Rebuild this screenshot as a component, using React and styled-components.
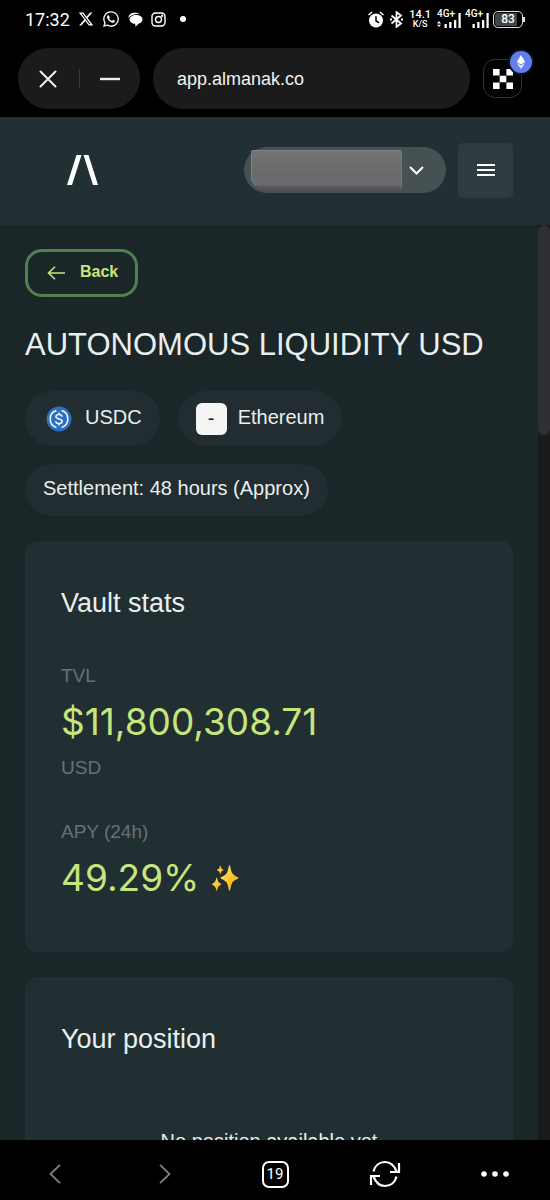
import React, { useState } from 'react'
import styled, { createGlobalStyle } from 'styled-components'
import { FaXTwitter, FaWhatsapp } from 'react-icons/fa6'

const page = '#1b2628'
const panel = '#212f33'
const chip = '#212d30'
const accent = '#c6e57c'
const light = '#e9eeef'
const muted = '#6a7072'
const sans = "'Liberation Sans', Arial, sans-serif"
const narrow = 'Roboto, sans-serif'

const UsdcIcon = () => (
	<svg width="26" height="26" viewBox="0 0 26 26" fill="none" aria-hidden="true">
		<circle cx="13" cy="13" r="12.5" fill="#2b6fc2" />
		<path
			d="M10.4 4.6a8.8 8.8 0 0 0 0 16.8M15.6 4.6a8.8 8.8 0 0 1 0 16.8"
			stroke="#eef4fb"
			strokeWidth="1.6"
		/>
		<path
			d="M16 10.6c-.2-1.4-1.3-2.1-3-2.1-1.8 0-3 .8-3 2.2 0 3.2 6.2 1.3 6.2 4.6 0 1.4-1.3 2.3-3.2 2.3s-3.1-.8-3.3-2.3M13 6.6v1.900M13 17.6v1.900"
			stroke="#eef4fb"
			strokeWidth="1.6"
		/>
	</svg>
)

const Sparkles = () => (
	<svg width="28" height="28" viewBox="0 0 28 28" aria-hidden="true">
		<defs>
			<linearGradient id="gold" x1="0" y1="0" x2="1" y2="1">
				<stop offset="0" stopColor="#fdea6b" />
				<stop offset="0.5" stopColor="#fcc934" />
				<stop offset="1" stopColor="#f29a1f" />
			</linearGradient>
		</defs>
		<g fill="url(#gold)">
			<path d="M18.5 1c.8 0 1 4.5 2.5 7.8s6.5 4 6.5 5.2-5 1.8-6.5 5.2S19.3 27 18.5 27s-1-4.5-2.5-7.8S9.5 15.2 9.5 14s5-1.900 6.5-5.2S17.7 1 18.5 1Z" />
			<path d="M5.7 13.5c.5 0 .6 2.5 1.5 4s3.2 2 3.2 2.7-2.3 1.1-3.2 2.7-1 4-1.5 4-.6-2.4-1.5-4S1 20.9 1 20.2s2.3-1.2 3.2-2.7 1-4 1.5-4Z" />
			<path d="M9.3 1.5c.4 0 .4 1.7 1 2.7s2.4 1.3 2.4 1.8-1.8.8-2.4 1.8-.6 2.7-1 2.7-.4-1.7-1-2.7S5.9 6.5 5.9 6s1.8-.8 2.4-1.8.6-2.7 1-2.7Z" />
		</g>
	</svg>
)

const ChatIcon = () => (
	<svg width="15" height="15" viewBox="0 0 15 15" fill="#fff" aria-hidden="true">
		<path d="M.6 6.2C.3 2.8 3 1 6 .8c2.5-.1 5 .4 6 1.6C8 1.6 3 2.4.6 6.2Z" />
		<path d="M8 3c3.8 0 6.5 1.6 6.5 4.3 0 2.2-1.3 3.7-3.7 4.3L7.5 14.7l-.3-2.9C4 11.6 1.6 10 1.6 7.5 1.6 4.8 4.3 3 8 3Z" />
	</svg>
)

const CameraIcon = () => (
	<svg width="15" height="15" viewBox="0 0 15 15" fill="none" stroke="#fff" strokeWidth="1.4" aria-hidden="true">
		<rect x="1" y="1" width="13" height="13" rx="3.5" />
		<circle cx="7.5" cy="7.5" r="3" />
		<circle cx="11.2" cy="3.8" r="0.5" />
	</svg>
)

const AlarmIcon = () => (
	<svg width="16" height="17" viewBox="0 0 16 17" fill="none" strokeLinecap="round" aria-hidden="true">
		<circle cx="8" cy="9.5" r="7" fill="#fff" />
		<path d="M1 3.6 3.7 1.3M15 3.6l-2.7-2.3" stroke="#fff" strokeWidth="1.5" />
		<path d="M8 5.8v4l2.6 1.7" stroke="#000" strokeWidth="1.5" />
	</svg>
)

const BluetoothIcon = () => (
	<svg width="13" height="17" viewBox="0 0 13 17" fill="none" stroke="#fff" strokeWidth="1.8" aria-hidden="true">
		<path d="m1.5 4.5 9.5 8-4.5 3.4V1.1L11 4.5l-9.5 8" />
		<path d="M0 8.5h2M11 8.5h2" />
	</svg>
)

const Bars = ({ arrows }) => (
	<svg width="24" height="17" viewBox="0 0 24 17" fill="#fff" aria-hidden="true">
		{arrows && <path d="m2 10 2 2.4H0ZM2 16l2-2.3H0Z" />}
		<path d="M7.5 13h2.3v4H7.5ZM12.2 11h2.3v6h-2.3ZM17 9h2.3v8H17ZM21.5 2h2.2v15h-2.2Z" />
	</svg>
)

const App = () => {
	const [url, setUrl] = useState('app.almanak.co')

	return (
		<Screen>
			<GlobalStyle />
			<StatusBar>
				<Group $gap={8}>
					<Clock>17:32</Clock>
					<FaXTwitter size={16} />
					<FaWhatsapp size={18} />
					<ChatIcon />
					<CameraIcon />
					<Dot />
				</Group>
				<Group $gap={6}>
					<AlarmIcon />
					<BluetoothIcon />
					<Speed>
						<b>14.1</b>
						<small>K/S</small>
					</Speed>
					<Group $gap={4}>
						<Signal>
							<span>4G+</span>
							<Bars arrows />
						</Signal>
						<Signal>
							<span>4G+</span>
							<Bars />
						</Signal>
						<Battery>83</Battery>
					</Group>
				</Group>
			</StatusBar>

			<Toolbar>
				<WindowButtons>
					<PlainButton aria-label="Close">
						<svg width="18" height="18" viewBox="0 0 18 18" stroke="#f0f0f0" strokeWidth="2" strokeLinecap="round">
							<path d="m1.5 1.5 15 15M16.5 1.5l-15 15" />
						</svg>
					</PlainButton>
					<Divider />
					<PlainButton aria-label="Minimise">
						<svg width="20" height="18" viewBox="0 0 20 18" stroke="#f0f0f0" strokeWidth="2.4">
							<path d="M0 9h20" />
						</svg>
					</PlainButton>
				</WindowButtons>
				<Address
					aria-label="Address"
					value={url}
					onChange={(e) => setUrl(e.target.value)}
				/>
				<WalletApp aria-label="Wallet">
					<svg width="20" height="20" viewBox="0 0 20 20" fill="#fff">
						<path d="M0 0h6.600v6.600H0ZM13.400 0H20v6.600h-6.600ZM6.700 6.700h6.600v6.600H6.700ZM0 13.400h6.600V20H0ZM13.400 13.400H20V20h-6.600Z" />
					</svg>
					<ChainBadge>
						<svg width="10" height="14" viewBox="0 0 10 14" fill="#fff">
							<path d="M5 0 9.2 7 5 9.5.8 7Z" />
							<path d="M.8 8.1 5 10.6l4.2-2.5L5 14Z" opacity="0.85" />
						</svg>
					</ChainBadge>
				</WalletApp>
			</Toolbar>

			<Header>
				<Logo href="#" aria-label="Home">
					<svg width="31" height="30" viewBox="0 0 31 30" fill="#fff">
						<path d="M9.5 0h5L5 30H0ZM16.5 0h5L31 30h-5Z" />
					</svg>
				</Logo>
				<Group $gap={12}>
					<Account aria-label="Account">
						<Redacted />
						<svg width="15" height="9" viewBox="0 0 15 9" fill="none" stroke="#fff" strokeWidth="2">
							<path d="m1 1 6.5 6.5L14 1" />
						</svg>
					</Account>
					<Menu aria-label="Menu">
						<svg width="18" height="14" viewBox="0 0 18 14" stroke="#fff" strokeWidth="2">
							<path d="M0 2h18M0 7h18M0 12h18" />
						</svg>
					</Menu>
				</Group>
			</Header>

			<Body>
				<Main>
					<Back>
						<svg width="18" height="14" viewBox="0 0 18 14" fill="none" stroke={accent} strokeWidth="1.6">
							<path d="M18 7H1.5M8 .7 1.5 7 8 13.3" />
						</svg>
						<span>Back</span>
					</Back>
					<Title>AUTONOMOUS LIQUIDITY USD</Title>
					<Chips>
						<Chip>
							<ChipIcon>
								<UsdcIcon />
							</ChipIcon>
							<span>USDC</span>
						</Chip>
						<Chip>
							<ChipIcon $filled>-</ChipIcon>
							<span>Ethereum</span>
						</Chip>
						<Chip $short>
							<span>Settlement: 48 hours (Approx)</span>
						</Chip>
					</Chips>

					<Card>
						<CardTitle>Vault stats</CardTitle>
						<Stat>
							<Label>TVL</Label>
							<Value>$11,800,308.71</Value>
							<Label>USD</Label>
						</Stat>
						<Stat>
							<Label>APY (24h)</Label>
							<Value>
								49.29%
								<Sparkles />
							</Value>
						</Stat>
					</Card>

					<Card>
						<CardTitle>Your position</CardTitle>
						<Empty>No position available yet</Empty>
					</Card>
				</Main>
				<Track>
					<Thumb />
				</Track>
			</Body>

			<BottomNav>
				<PlainButton aria-label="Previous page">
					<svg width="12" height="20" viewBox="0 0 12 20" fill="none" stroke="#808080" strokeWidth="1.8">
						<path d="M11 .8 1.5 10l9.5 9.2" />
					</svg>
				</PlainButton>
				<PlainButton aria-label="Next page">
					<svg width="12" height="20" viewBox="0 0 12 20" fill="none" stroke="#808080" strokeWidth="1.8">
						<path d="M1 .8 10.5 10 1 19.2" />
					</svg>
				</PlainButton>
				<PlainButton aria-label="Open tabs">
					<TabCount>19</TabCount>
				</PlainButton>
				<PlainButton aria-label="Reload">
					<svg width="32" height="28" viewBox="0 0 32 28" fill="none" stroke="#fff" strokeWidth="2.2">
						<path d="M4.5 11.5C5.8 5.5 10.5 2 16 2c5 0 9 2.8 11.5 9.5M30 3v9h-9M27.5 16.5C26.2 22.5 21.5 26 16 26c-5 0-9-2.8-11.5-9.5M2 25v-9h9" />
					</svg>
				</PlainButton>
				<PlainButton aria-label="More">
					<svg width="28" height="6" viewBox="0 0 28 6" fill="#fff">
						<circle cx="3" cy="3" r="2.8" />
						<circle cx="14" cy="3" r="2.8" />
						<circle cx="25" cy="3" r="2.8" />
					</svg>
				</PlainButton>
			</BottomNav>
		</Screen>
	)
}

const GlobalStyle = createGlobalStyle`
	* {
		box-sizing: border-box;
	}
	body {
		margin: 0;
		background: #000;
		font-family: ${sans};
	}
	button {
		font-family: inherit;
		cursor: pointer;
	}
	svg {
		display: block;
		flex: none;
	}
`

const Screen = styled.div`
	display: flex;
	flex-direction: column;
	height: 100vh;
	background: #000;
	color: ${light};
`

const Group = styled.div`
	display: flex;
	align-items: center;
	gap: ${(props) => props.$gap}px;
`

const StatusBar = styled.div`
	display: flex;
	justify-content: space-between;
	align-items: center;
	flex: none;
	height: 48px;
	padding: 0 27px 10px 25px;
	color: #fff;
	font-family: ${narrow};
`

const Clock = styled.span`
	font-size: 18px;
`

const Dot = styled.span`
	width: 6px;
	height: 6px;
	margin-left: 6px;
	border-radius: 50%;
	background: #fff;
`

const Speed = styled.span`
	display: flex;
	flex-direction: column;
	align-items: center;
	font-size: 11px;
	line-height: 11px;
	b {
		font-weight: 500;
	}
	small {
		font-size: 9px;
		font-weight: 500;
		line-height: 9px;
	}
`

const Signal = styled.span`
	position: relative;
	span {
		position: absolute;
		top: -2px;
		left: 0;
		font-size: 10px;
		font-weight: 500;
		line-height: 10px;
	}
`

const Battery = styled.span`
	position: relative;
	width: 30px;
	height: 17px;
	border: 1px solid #ddd;
	border-radius: 5px;
	background: linear-gradient(90deg, #444 83%, #000 83%);
	box-shadow: inset 0 0 0 1px #000;
	font-size: 12px;
	font-weight: 500;
	line-height: 15px;
	text-align: center;
	&::after {
		content: '';
		position: absolute;
		top: 5px;
		right: -3px;
		width: 2px;
		height: 5px;
		background: #ddd;
	}
`

const Toolbar = styled.div`
	display: flex;
	flex: none;
	align-items: center;
	gap: 13px;
	padding: 0 28px 8px 18px;
`

const PlainButton = styled.button`
	display: flex;
	flex: 1;
	align-items: center;
	justify-content: center;
	padding: 0;
	border: none;
	background: none;
	color: #fff;
`

const WindowButtons = styled.div`
	display: flex;
	flex: none;
	align-items: center;
	width: 122px;
	height: 61px;
	border-radius: 31px;
	background: #1b1b1b;
`

const Divider = styled.span`
	width: 1px;
	height: 19px;
	background: #3a3a3a;
`

const Address = styled.input`
	flex: 1;
	min-width: 0;
	height: 61px;
	padding: 2px 24px 0;
	border: none;
	border-radius: 31px;
	background: #1b1b1b;
	color: #f2f2f2;
	font-family: ${sans};
	font-size: 18px;
`

const WalletApp = styled.button`
	position: relative;
	display: flex;
	flex: none;
	align-items: center;
	justify-content: center;
	width: 39px;
	height: 39px;
	padding: 0;
	border: 1px solid #333;
	border-radius: 12px;
	background: #000;
`

const ChainBadge = styled.span`
	position: absolute;
	top: -11px;
	right: -13px;
	display: flex;
	align-items: center;
	justify-content: center;
	width: 26px;
	height: 26px;
	border: 2px solid #0b1322;
	border-radius: 50%;
	background: #627eea;
`

const Header = styled.header`
	display: flex;
	flex: none;
	justify-content: space-between;
	align-items: center;
	height: 108px;
	padding: 0 37px 0 67px;
	border-bottom: 2px solid #262d30;
	background: #222f33;
`

const Logo = styled.a`
	display: block;
`

const Account = styled.button`
	display: flex;
	align-items: center;
	gap: 7px;
	width: 202px;
	height: 46px;
	padding: 0 7px;
	border: none;
	border-radius: 23px;
	background: #465154;
`

const Redacted = styled.span`
	width: 151px;
	height: 40px;
	border: 1px solid #7d8594;
	border-color: #7d8594 #76777c #5a5860 #7480a8;
	border-radius: 2px 2px 4px 14px;
	background: linear-gradient(#737274, #6a6a6b 60%, #6b696b 88%, #514d55);
`

const Menu = styled.button`
	display: flex;
	align-items: center;
	justify-content: center;
	width: 55px;
	height: 55px;
	border: none;
	border-radius: 5px;
	background: #2f3b40;
`

const Body = styled.div`
	display: flex;
	flex: 1;
	min-height: 0;
	background: ${page};
`

const Main = styled.main`
	flex: 1;
	min-width: 0;
	padding: 24px 25px;
	overflow: hidden;
`

const Track = styled.div`
	flex: none;
	width: 12px;
	background: #1a1a1c;
`

const Thumb = styled.div`
	height: 210px;
	border-radius: 6px;
	background: #312f33;
`

const Back = styled.button`
	display: flex;
	align-items: center;
	gap: 15px;
	height: 48px;
	padding: 0 17px 0 19px;
	border: 3px solid #50804f;
	border-radius: 17px;
	background: ${page};
	color: ${accent};
	font-size: 16px;
	font-weight: bold;
	span {
		padding-bottom: 2px;
	}
`

const Title = styled.h1`
	margin: 28px 0 26px;
	font-size: 31px;
	font-weight: normal;
	line-height: 40px;
`

const Chips = styled.div`
	display: flex;
	flex-wrap: wrap;
	gap: 18px;
`

const Chip = styled.span`
	display: flex;
	align-items: center;
	gap: 11px;
	height: ${(props) => (props.$short ? 52 : 55)}px;
	padding: 0 18px;
	border-radius: 28px;
	background: ${chip};
	font-size: 20px;
	> span:last-child {
		padding-bottom: 3px;
	}
`

const ChipIcon = styled.span`
	display: flex;
	align-items: center;
	justify-content: center;
	width: 31px;
	height: 32px;
	border-radius: 6px;
	background: ${(props) => (props.$filled ? '#f4f5f5' : 'none')};
	color: #222;
`

const Card = styled.section`
	margin-top: 25px;
	padding: 46px 36px 50px;
	border-radius: 12px;
	background: ${panel};
`

const CardTitle = styled.h2`
	margin: 0 0 43px;
	font-size: 27px;
	font-weight: normal;
	line-height: 32px;
`

const Stat = styled.div`
	display: flex;
	flex-direction: column;
	gap: 8px;
	& + & {
		margin-top: 36px;
	}
`

const Label = styled.span`
	color: ${muted};
	font-size: 19px;
	line-height: 28px;
`

const Value = styled.span`
	display: flex;
	align-items: center;
	gap: 12px;
	color: ${accent};
	font-family: Inter, sans-serif;
	font-size: 37px;
	line-height: 48px;
`

const Empty = styled.p`
	margin: 72px 0 0;
	font-size: 20px;
	line-height: 28px;
	text-align: center;
`

const BottomNav = styled.nav`
	display: flex;
	flex: none;
	height: 60px;
	padding-top: 8px;
	background: #000;
`

const TabCount = styled.span`
	width: 27px;
	height: 27px;
	border: 2px solid #fff;
	border-radius: 7px;
	font-family: ${narrow};
	font-size: 15px;
	line-height: 23px;
`

export default App
